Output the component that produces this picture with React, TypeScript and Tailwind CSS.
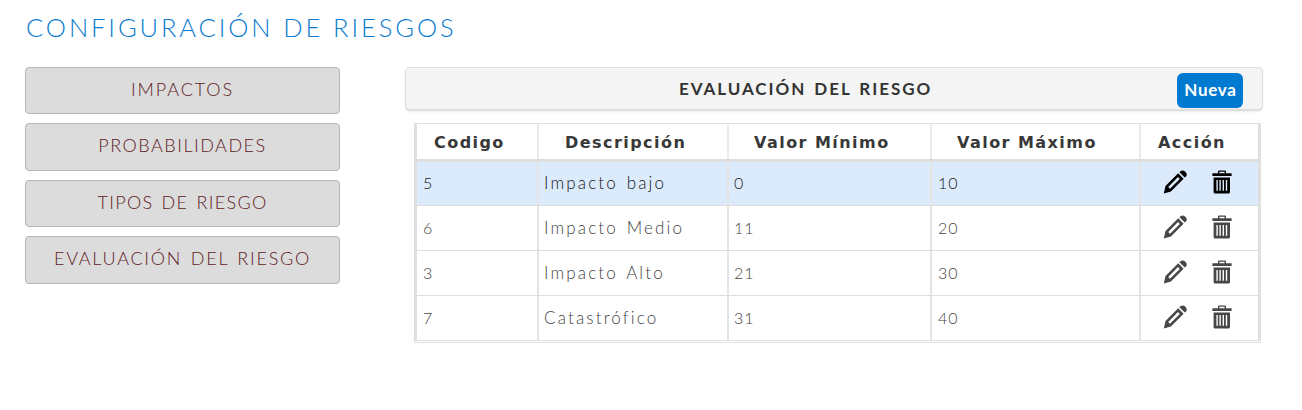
const menu = [
  { label: 'IMPACTOS', cls: 'h-[47px] pb-[2px] tracking-[1.9px]' },
  { label: 'PROBABILIDADES', cls: 'h-[48px] pb-[3px] tracking-[1.5px]' },
  { label: 'TIPOS DE RIESGO', cls: 'h-[47px] pb-[2px] tracking-[1.3px] [word-spacing:2px]' },
  { label: 'EVALUACIÓN DEL RIESGO', cls: 'h-[48px] pb-[3px] tracking-[1.75px] [word-spacing:2px]' },
];

const headers = [
  { label: 'Codigo', cls: 'border-r-2 pl-[17px]' },
  { label: 'Descripción', cls: 'border-r-2 pl-[26px]' },
  { label: 'Valor Mínimo', cls: 'border-r-2 pl-[25px]' },
  { label: 'Valor Máximo', cls: 'border-r-2 pl-[25px]' },
  { label: 'Acción', cls: 'pl-[17px]' },
];

const rows = [
  { code: '5', name: 'Impacto bajo', min: '0', max: '10' },
  { code: '6', name: 'Impacto Medio', min: '11', max: '20' },
  { code: '3', name: 'Impacto Alto', min: '21', max: '30' },
  { code: '7', name: 'Catastrófico', min: '31', max: '40' },
];

function Pencil() {
  return (
    <svg width="24" height="24" viewBox="0 0 24 24" fill="currentColor">
      <path fillRule="evenodd" d="M.8 23.5 2.5 16 15.2 3.3 20.6 8.7 7.9 21.4ZM5.2 16.9 7 18.7 16.8 8.9 15 7.1Z" />
      <path d="M16.4 2.2 17.8 1Q20-.5 22.4 1.7 24.7 4.1 23.1 6.2L21.8 7.6Z" />
    </svg>
  );
}

function Trash() {
  return (
    <svg width="20" height="24" viewBox="0 0 20 24" fill="currentColor">
      <path fillRule="evenodd" d="M6 3.2V1.5Q6 .5 7 .5H13Q14 .5 14 1.5V3.2H19.6V5.9H.4V3.2ZM7.4 3.2H12.6V1.8H7.4Z" />
      <path fillRule="evenodd" d="M1.6 7.5H18V21.9Q18 23.5 16.4 23.5H3.2Q1.6 23.5 1.6 21.9ZM4.4 10V20.8H5.8V10ZM7.4 10V20.8H8.8V10ZM10.6 10V20.8H12V10ZM13.8 10V20.8H15.2V10Z" />
    </svg>
  );
}

const grid = 'grid grid-cols-[122px_190px_203px_209px_117px]';

export default function App() {
  return (
    <main className="h-[410px] w-[1302px] overflow-hidden bg-white pl-[25px] pt-[9px] font-['Lato','Noto_Sans',sans-serif]">
      <h1 className="h-[58px] whitespace-nowrap pl-px text-[25.5px] font-light leading-[36px] tracking-[2.9px] text-[#0c7cd0]">CONFIGURACIÓN DE RIESGOS</h1>
      <div className="flex items-start">
        <nav className="flex w-[315px] flex-col gap-[9px]">
          {menu.map((m) => (
            <button key={m.label} className={`${m.cls} whitespace-nowrap rounded-[4px] border border-[#b5b5b5] bg-[#dcdcdc] text-[18px] font-light text-[#602024]`}>
              {m.label}
            </button>
          ))}
        </nav>
        <section className="ml-[65px] w-[858px]">
          <header className="flex h-[44px] items-center rounded-[5px] border border-b-2 border-[#dedede] bg-[#f4f4f4] shadow-[0_1px_2px_rgba(0,0,0,0.08)]">
            <h2 className="ml-[273px] w-[498px] whitespace-nowrap text-[17px] font-bold leading-6 tracking-[1.95px] text-[#333] [word-spacing:2px]">EVALUACIÓN DEL RIESGO</h2>
            <button className="mt-[4px] h-[35px] w-[66px] rounded-[6px] bg-[#007ad0] pb-px pl-px text-[17px] font-bold tracking-[0.7px] text-white">Nueva</button>
          </header>
          <div className="ml-[9px] mt-3 w-[847px] border border-[#dfdfdf] pb-px">
            <div className="w-[845px] border-b border-l-2 border-r-2 border-[#dfdfdf]">
              <div className={`${grid} h-[38px] border-b-[3px] border-[#dedede] font-['DejaVu_Sans',sans-serif] text-[16px] font-bold leading-[38px] tracking-[1.45px] text-[#383838]`}>
                {headers.map((h) => (
                  <div key={h.label} className={`${h.cls} h-[35px] whitespace-nowrap border-[#ebebeb]`}>{h.label}</div>
                ))}
              </div>
              {rows.map((r, i) => (
                <div key={r.code} className={`${grid} ${i === 0 ? 'h-[43px] bg-[#dcebfb] leading-[42px] text-[#161616]' : 'h-[45px] border-t border-[#dedede] leading-[43px] text-[#444]'} text-[16px] font-light tracking-[0.9px]`}>
                  <div className="border-r-2 border-[#e4e4e4] pl-[6px]">{r.code}</div>
                  <div className="whitespace-nowrap border-r-2 border-[#e4e4e4] pl-[5px] text-[17px] tracking-[2.15px] [word-spacing:2px]">{r.name}</div>
                  <div className="border-r-2 border-[#e4e4e4] pl-[5px]">{r.min}</div>
                  <div className="border-r-2 border-[#e4e4e4] pl-[6px]">{r.max}</div>
                  <div className={`flex items-start gap-[25px] pl-[22px] ${i === 0 ? 'pt-[8px] text-black' : 'pt-[9px] text-[#474747]'}`}>
                    <Pencil />
                    <Trash />
                  </div>
                </div>
              ))}
            </div>
          </div>
        </section>
      </div>
    </main>
  );
}
